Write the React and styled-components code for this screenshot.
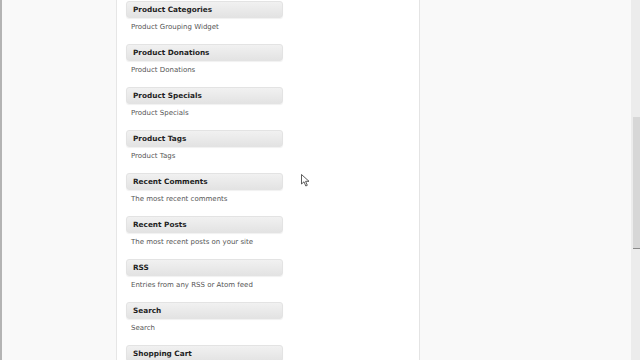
import React from "react";
import styled, { createGlobalStyle } from "styled-components";

const widgets = [
  { title: "Product Categories", text: "Product Grouping Widget" },
  { title: "Product Donations", text: "Product Donations" },
  { title: "Product Specials", text: "Product Specials" },
  { title: "Product Tags", text: "Product Tags" },
  { title: "Recent Comments", text: "The most recent comments" },
  { title: "Recent Posts", text: "The most recent posts on your site" },
  { title: "RSS", text: "Entries from any RSS or Atom feed" },
  { title: "Search", text: "Search" },
  { title: "Shopping Cart", text: "Shopping Cart" },
];

const GlobalStyle = createGlobalStyle`
  html, body {
    margin: 0;
    padding: 0;
    background: #f9f9f9;
    overflow: hidden;
  }
  body {
    font-family: "DejaVu Sans", Verdana, sans-serif;
  }
`;

const Page = styled.div`
  position: relative;
  display: flex;
  width: 640px;
  height: 360px;
  overflow: hidden;
  background: #f9f9f9;
`;

const LeftMenu = styled.div`
  width: 114px;
  border-left: 2px solid #b4b4b4;
  border-right: 1px solid #e6e6e6;
  background: #f9f9f9;
`;

const Main = styled.div`
  width: 300px;
  background: #ffffff;
  border-right: 1px solid #e4e4e4;
  padding-right: 2px;
  box-shadow: 1px 0 0 #f2f2f2;
`;

const WidgetList = styled.div`
  display: flex;
  flex-direction: column;
  padding: 1px 0 0 9px;
`;

const Widget = styled.div`
  height: 43px;
  display: flex;
  flex-direction: column;
`;

const WidgetTitle = styled.div`
  box-sizing: border-box;
  width: 157px;
  height: 17px;
  padding: 0 6px;
  display: flex;
  align-items: center;
  border: 1px solid #e3e3e3;
  border-radius: 3px;
  background: linear-gradient(#f1f1f1, #e3e3e3);
  box-shadow: 0 1px 1px rgba(0, 0, 0, 0.06);
  font-weight: bold;
  font-size: 7.3px;
  color: #1f1f1f;
`;

const WidgetText = styled.div`
  margin: 5px 0 0 5px;
  font-size: 7px;
  color: #555555;
`;

const Side = styled.div`
  flex: 1;
  background: #f9f9f9;
`;

const Scrollbar = styled.div`
  width: 9px;
  background: #ececec;
  display: flex;
  justify-content: flex-end;
`;

const Thumb = styled.div`
  width: 7px;
  height: 131px;
  margin-top: 117px;
  background: #d7d7d7;
  border-bottom: 1px solid #8a8a8a;
`;

const Cursor = styled.svg`
  position: absolute;
  left: 301px;
  top: 174px;
  width: 9px;
  height: 13px;
`;

export default function App() {
  return (
    <>
      <GlobalStyle />
      <Page>
        <LeftMenu />
        <Main>
          <WidgetList>
            {widgets.map((w) => (
              <Widget key={w.title}>
                <WidgetTitle>{w.title}</WidgetTitle>
                <WidgetText>{w.text}</WidgetText>
              </Widget>
            ))}
          </WidgetList>
        </Main>
        <Side />
        <Scrollbar>
          <Thumb />
        </Scrollbar>
        <Cursor viewBox="0 0 9 13">
          <path
            d="M0.5 0.5 L0.5 10 L3 7.8 L4.8 12 L6.3 11.3 L4.6 7.3 L8 7.3 Z"
            fill="#ffffff"
            stroke="#333333"
            strokeWidth="0.8"
            strokeLinejoin="round"
          />
        </Cursor>
      </Page>
    </>
  );
}
